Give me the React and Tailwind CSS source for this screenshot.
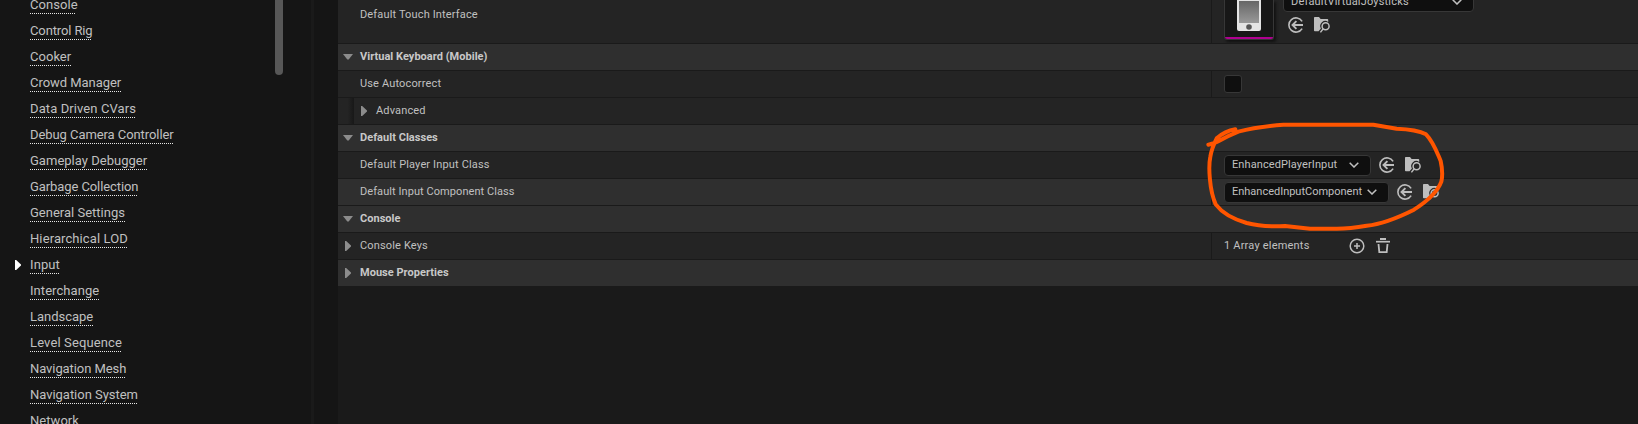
const links = [
  ['Console', 46, 0.05], ['Control Rig', 62, -0.12], ['Cooker', 41, 0.03], ['Crowd Manager', 91, -0.04],
  ['Data Driven CVars', 105, 0.1], ['Debug Camera Controller', 143, -0.07], ['Gameplay Debugger', 117, 0.02],
  ['Garbage Collection', 107, -0.09], ['General Settings', 95, 0], ['Hierarchical LOD', 97, 0.1],
  ['Input', 29, 0.1], ['Interchange', 69, 0.06], ['Landscape', 63, -0.03], ['Level Sequence', 91, 0.13],
  ['Navigation Mesh', 95, -0.08], ['Navigation System', 107, -0.03], ['Network', 49, 0.05],
];

function Arrow({ open }) {
  return open ? (
    <svg width="10" height="6" viewBox="0 0 10 6"><path d="M0 0H10L5.7 5.6H4.3Z" fill="#8c8c8c" /></svg>
  ) : (
    <svg className="ml-[2px]" width="6" height="10" viewBox="0 0 6 10"><path d="M0 0L1.2 0L6 4.6V5.4L1.2 10H0Z" fill="#8c8c8c" /></svg>
  );
}

function UseIcon() {
  return (
    <svg width="16" height="16" viewBox="0 0 16 16" fill="none" stroke="#bebebe">
      <path d="M14.1 4.4A7.1 7.1 0 1 0 14.1 11.6" strokeWidth="1.6" />
      <path d="M15 8H4.6M8.4 4.1L4.5 8L8.4 11.9" strokeWidth="1.9" />
    </svg>
  );
}

function BrowseIcon() {
  return (
    <svg width="16" height="16" viewBox="0 0 16 16" fill="none">
      <path d="M0 0.8Q0 0 0.8 0H5L6.6 2H13.4Q14.2 2 14.2 2.8V4.9A5 5 0 0 0 6.9 11.4L4.6 14.2H0.8Q0 14.2 0 13.4Z" fill="#bebebe" />
      <circle cx="11.6" cy="9.2" r="3.5" stroke="#bebebe" strokeWidth="1.5" />
      <path d="M9.2 11.8L6.4 15.4" stroke="#bebebe" strokeWidth="1.5" />
    </svg>
  );
}

function Select({ label, className }) {
  return (
    <div className={`flex h-[21px] shrink-0 items-center justify-between rounded-[4px] border border-[#373737] bg-[#0f0f0f] pl-[7px] pr-[11px] ${className}`}>
      <span>{label}</span>
      <svg width="10" height="6" viewBox="0 0 10 6" fill="none" stroke="#c0c0c0" strokeWidth="1.5"><path d="M0.7 0.7L5 5L9.3 0.7" /></svg>
    </div>
  );
}

function Row({ label, bold, open, arrow, light, indent, value, tracking = 'tracking-[0.15px]' }) {
  return (
    <div className={`flex h-[27px] border-t border-[#1a1a1a] ${light ? 'bg-[#2f2f2f]' : 'bg-[#242424]'}`}>
      {indent && <div className="w-4 bg-linear-to-r from-[#242424] from-60% to-[#181818]" />}
      <div className="flex w-[22px] items-center pb-px pl-[5px]">
        {arrow && <Arrow open={open} />}
      </div>
      <div className={`grow pt-[5px] leading-4 ${bold ? 'font-bold tracking-[0.03px] text-[#c8c8c8]' : tracking}`}>{label}</div>
      {value && <div className="flex w-[427px] items-center border-l border-[#1a1a1a] pl-3">{value}</div>}
    </div>
  );
}

export default function App() {
  return (
    <div className="relative flex h-[424px] w-[1638px] overflow-hidden bg-[#151515] font-[Roboto,sans-serif] text-[11px] text-[#c0c0c0]">
      <nav className="flex w-[311px] justify-between">
        <div className="-mt-2">
          {links.map(([label, width, spacing]) => (
            <div key={label} className="flex h-[26px] items-center text-[13px]">
              <div className="flex w-[30px] pl-[15px]">
                {label === 'Input' && <svg width="6" height="10" viewBox="0 0 6 10"><path d="M0 0H1.2L6 4.6V5.4L1.2 10H0Z" fill="#fff" /></svg>}
              </div>
              <div style={{ width }}>
                <div className="h-[17px] whitespace-nowrap leading-[18px]" style={{ letterSpacing: spacing }}>{label}</div>
                <div className="h-px bg-[repeating-linear-gradient(90deg,#e8e8e8_0_1px,transparent_1px_2px)]" />
              </div>
            </div>
          ))}
        </div>
        <div className="mr-7 h-[75px] w-2 rounded-b-full bg-[#575757]" />
      </nav>
      <div className="w-[3px] bg-[#1a1a1a]" />
      <main className="ml-6 flex grow flex-col bg-[#1a1a1a]">
        <div className="flex h-[43px] bg-[#242424]">
          <div className="grow pl-[22px] pt-[7px] leading-4 tracking-[0.15px]">Default Touch Interface</div>
          <div className="flex w-[427px] border-l border-[#1a1a1a] pl-3">
            <div className="flex h-10 w-[50px] flex-col items-center justify-between overflow-hidden rounded-b-[3px] border-x border-b border-[#373737] bg-[#171717] shadow-[2px_2px_3px_#111]">
              <svg width="24" height="31" viewBox="0 0 24 31">
                <defs><linearGradient id="screen" x2="0" y2="1"><stop stopColor="#666" /><stop offset="1" stopColor="#999" /></linearGradient></defs>
                <rect y="-6" width="24" height="37" rx="2" fill="#e4e4e4" />
                <rect x="2" y="1" width="20" height="22" fill="url(#screen)" />
                <circle cx="12" cy="27" r="2.8" fill="#555" />
              </svg>
              <div className="h-[2px] w-full bg-[#b00090]" />
            </div>
            <div className="ml-[9px]">
              <Select label="DefaultVirtualJoysticks" className="-mt-[9px] w-[191px] pt-px tracking-[0.18px]" />
              <div className="ml-[5px] mt-[5px] flex gap-[10px]"><UseIcon /><BrowseIcon /></div>
            </div>
          </div>
        </div>
        <Row label="Virtual Keyboard (Mobile)" bold light arrow open />
        <Row label="Use Autocorrect" value={<div className="size-[18px] rounded-[3px] border border-[#373737] bg-[#0f0f0f]" />} />
        <Row label="Advanced" arrow indent />
        <Row label="Default Classes" bold light arrow open />
        <Row label="Default Player Input Class" value={<><Select label="EnhancedPlayerInput" className="w-[147px] tracking-[0.1px]" /><div className="ml-2 flex gap-[10px]"><UseIcon /><BrowseIcon /></div></>} />
        <Row label="Default Input Component Class" tracking="tracking-[0.07px]" light value={<><Select label="EnhancedInputComponent" className="w-[165px] tracking-[-0.01px]" /><div className="ml-2 flex gap-[10px]"><UseIcon /><BrowseIcon /></div></>} />
        <Row label="Console" bold light arrow open />
        <Row
          label="Console Keys"
          arrow
          value={
            <>
              <span className="w-[125px] tracking-[0.2px]">1 Array elements</span>
              <svg width="16" height="16" viewBox="0 0 16 16" fill="none" stroke="#bebebe" strokeWidth="1.5"><circle cx="8" cy="8" r="6.8" /><path d="M8 5V11M5 8H11" /></svg>
              <svg className="ml-[11px]" width="14" height="16" viewBox="0 0 14 16" fill="none" stroke="#bebebe"><path d="M4 1H10" strokeWidth="2" /><path d="M0 3.7H14" strokeWidth="1.7" /><path d="M2.5 6L3.3 14.2H10.7L11.5 6" strokeWidth="1.8" /></svg>
            </>
          }
        />
        <Row label="Mouse Properties" bold light arrow />
      </main>
      <svg className="pointer-events-none absolute left-[1200px] top-[110px]" width="260" height="130" viewBox="0 0 780 390" fill="none" stroke="#ff5500" strokeWidth="12" strokeLinecap="round" strokeLinejoin="round">
        <path d="M25 104Q43 101 55 94Q85 77 115 65Q170 50 250 44H520L590 56Q650 58 678 73C700 95 710 125 722 153Q730 190 724 215C713 245 680 275 642 299C600 320 550 342 500 347Q450 356 410 356H330L255 348Q190 352 140 339Q75 320 47 283C28 240 25 170 31 140Q35 115 50 85Q75 63 106 58" />
      </svg>
    </div>
  );
}
